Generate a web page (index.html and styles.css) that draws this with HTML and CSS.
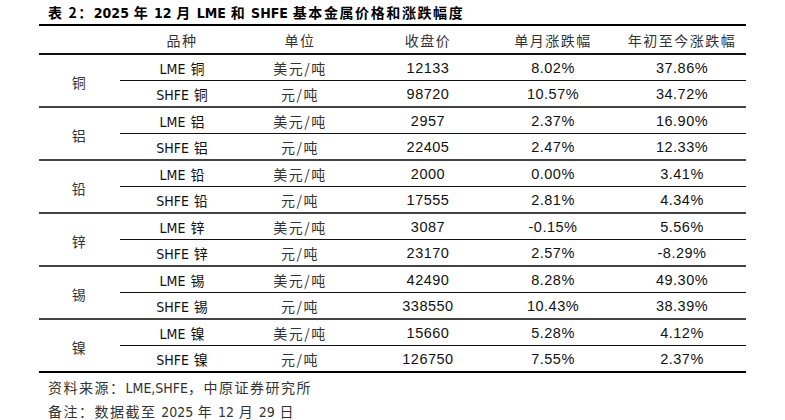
FILE: index.html
```html
<!DOCTYPE html>
<html lang="zh">
<head>
<meta charset="utf-8">
<link rel="stylesheet" href="styles.css">
</head>
<body>
<div class="title">表 2：<span class="nar">2025</span> 年 <span class="nar">12</span> 月 <span class="nar">LME</span> 和 <span class="nar">SHFE</span> 基本金属价格和涨跌幅度</div>
<div class="table">
  <div class="row head">
    <div class="c c1"></div>
    <div class="c c2 cn">品种</div>
    <div class="c c3 cn">单位</div>
    <div class="c c4 cn">收盘价</div>
    <div class="c c5 cn">单月涨跌幅</div>
    <div class="c c6 cn">年初至今涨跌幅</div>
  </div>

  <div class="group">
    <div class="name cn">铜</div>
    <div class="c c2 r1 nm">LME 铜</div><div class="c c3 r1 cn">美元/吨</div><div class="c c4 r1 num">12133</div><div class="c c5 r1 num">8.02%</div><div class="c c6 r1 num">37.86%</div>
    <div class="c c2 nm">SHFE 铜</div><div class="c c3 cn">元/吨</div><div class="c c4 num">98720</div><div class="c c5 num">10.57%</div><div class="c c6 num">34.72%</div>
  </div>

  <div class="group">
    <div class="name cn">铝</div>
    <div class="c c2 r1 nm">LME 铝</div><div class="c c3 r1 cn">美元/吨</div><div class="c c4 r1 num">2957</div><div class="c c5 r1 num">2.37%</div><div class="c c6 r1 num">16.90%</div>
    <div class="c c2 nm">SHFE 铝</div><div class="c c3 cn">元/吨</div><div class="c c4 num">22405</div><div class="c c5 num">2.47%</div><div class="c c6 num">12.33%</div>
  </div>

  <div class="group">
    <div class="name cn">铅</div>
    <div class="c c2 r1 nm">LME 铅</div><div class="c c3 r1 cn">美元/吨</div><div class="c c4 r1 num">2000</div><div class="c c5 r1 num">0.00%</div><div class="c c6 r1 num">3.41%</div>
    <div class="c c2 nm">SHFE 铅</div><div class="c c3 cn">元/吨</div><div class="c c4 num">17555</div><div class="c c5 num">2.81%</div><div class="c c6 num">4.34%</div>
  </div>

  <div class="group">
    <div class="name cn">锌</div>
    <div class="c c2 r1 nm">LME 锌</div><div class="c c3 r1 cn">美元/吨</div><div class="c c4 r1 num">3087</div><div class="c c5 r1 num">-0.15%</div><div class="c c6 r1 num">5.56%</div>
    <div class="c c2 nm">SHFE 锌</div><div class="c c3 cn">元/吨</div><div class="c c4 num">23170</div><div class="c c5 num">2.57%</div><div class="c c6 num">-8.29%</div>
  </div>

  <div class="group">
    <div class="name cn">锡</div>
    <div class="c c2 r1 nm">LME 锡</div><div class="c c3 r1 cn">美元/吨</div><div class="c c4 r1 num">42490</div><div class="c c5 r1 num">8.28%</div><div class="c c6 r1 num">49.30%</div>
    <div class="c c2 nm">SHFE 锡</div><div class="c c3 cn">元/吨</div><div class="c c4 num">338550</div><div class="c c5 num">10.43%</div><div class="c c6 num">38.39%</div>
  </div>

  <div class="group last">
    <div class="name cn">镍</div>
    <div class="c c2 r1 nm">LME 镍</div><div class="c c3 r1 cn">美元/吨</div><div class="c c4 r1 num">15660</div><div class="c c5 r1 num">5.28%</div><div class="c c6 r1 num">4.12%</div>
    <div class="c c2 nm">SHFE 镍</div><div class="c c3 cn">元/吨</div><div class="c c4 num">126750</div><div class="c c5 num">7.55%</div><div class="c c6 num">2.37%</div>
  </div>
</div>
<div class="notes cn">
  <div>资料来源：<span class="nar">LME,SHFE</span>，中原证券研究所</div>
  <div>备注：数据截至 <span class="nar">2025</span> 年 <span class="nar">12</span> 月 <span class="nar">29</span> 日</div>
</div>
</body>
</html>
```

FILE: styles.css
```css
html, body {
  margin: 0;
  padding: 0;
  background: #fff;
  color: #111;
}
body {
  padding-top: 2px;
  width: 785px;
  height: 420px;
  overflow: hidden;
  font-family: "Noto Sans CJK SC", sans-serif;
}
.title {
  margin-left: 48px;
  font-size: 14px;
  line-height: 21px;
  font-weight: bold;
  letter-spacing: 1.6px;
  color: #000;
}
.nar {
  font-family: "DejaVu Sans Condensed", "Liberation Sans", sans-serif;
  font-stretch: condensed;
  letter-spacing: 0;
}
.table {
  margin-left: 39px;
  width: 707px;
  border-top: 2px solid #000;
}
.row, .group {
  display: grid;
  grid-template-columns: 81px 124px 112px 144px 106px 140px;
}
.head {
  height: 27px;
  border-bottom: 2px solid #111;
}
.group {
  grid-template-rows: 26px 25px;
  border-bottom: 2px solid #444;
}
.group.last {
  border-bottom: 2px solid #000;
}
.c {
  display: flex;
  align-items: center;
  justify-content: center;
  box-sizing: border-box;
  font-size: 14px;
}
.c6 { padding-left: 12px; }
.r1 { border-bottom: 1px solid #111; }
.name {
  grid-row: 1 / span 2;
  grid-column: 1;
  display: flex;
  align-items: center;
  justify-content: center;
  padding-top: 2px;
  font-size: 14px;
  color: #333;
}
.cn {
  font-family: "Noto Sans CJK SC", sans-serif;
  letter-spacing: 1.5px;
  color: #333;
}
.nm {
  font-family: "DejaVu Sans Condensed", "Liberation Sans", "Noto Sans CJK SC", sans-serif;
  font-stretch: condensed;
  font-size: 14px;
  word-spacing: 1px;
  color: #111;
}
.num {
  font-family: "Liberation Sans", Arial, sans-serif;
  font-size: 14.5px;
  letter-spacing: 0.5px;
  color: #111;
}
.notes {
  margin-left: 48px;
  padding-top: 3px;
  font-size: 14px;
  line-height: 23px;
  letter-spacing: 1.5px;
}
```
